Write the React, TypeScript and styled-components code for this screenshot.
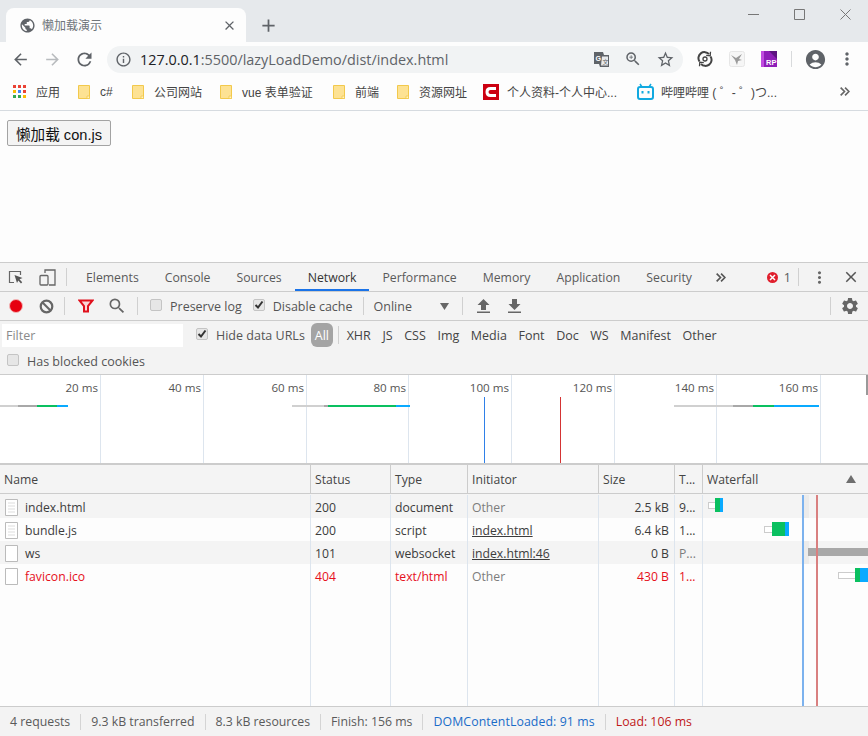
import React from "react";
import styled, { createGlobalStyle } from "styled-components";
import {
  MdAccountCircle, MdAdd, MdArrowBack, MdArrowForward, MdClose, MdInfoOutline, MdMoreVert,
  MdPublic, MdRefresh, MdSearch, MdSettings, MdStarBorder, MdZoomIn,
} from "react-icons/md";

const CJK = `"Noto Sans CJK SC", sans-serif`;
const UI = `"Open Sans", "Noto Sans CJK SC", sans-serif`;

const Global = createGlobalStyle`
  html, body { margin: 0; padding: 0; background: #fdfdfd; overflow: hidden; }
  * { box-sizing: border-box; }
`;

const Page = styled.div`
  width: 868px; height: 736px; display: flex; flex-direction: column; overflow: hidden;
  font-family: ${UI}; background: #fdfdfd;
`;

/* ---------- browser chrome ---------- */
const TabStrip = styled.div`
  height: 42px; flex: none; background: #e6e9ec; display: flex; align-items: flex-end; padding-left: 6px; position: relative;
`;
const Tab = styled.div`
  width: 240px; height: 34px; background: #fdfdfd; border-radius: 8px 8px 0 0; display: flex; align-items: center;
  padding: 0 9px 0 13px; color: #5f6368;
`;
const TabTitle = styled.span`
  font: 12px ${CJK}; color: #70757a; margin: -2px 0 0 6px; flex: 1;
`;
const NewTab = styled.div`
  height: 34px; margin-left: 12px; display: flex; align-items: center; color: #5f6368;
`;
const WindowControls = styled.div`
  margin-left: auto; align-self: flex-start; display: flex; color: #777;
`;
const WindowButton = styled.div`
  width: 46px; height: 28px; display: flex; align-items: center; justify-content: center;
`;
const NavBar = styled.div`
  height: 34px; flex: none; display: flex; align-items: center; padding-left: 4px; color: #5f6368;
`;
const NavButton = styled.div<{ $dim?: boolean }>`
  width: 32px; height: 28px; display: flex; align-items: center; justify-content: center;
  color: ${(p) => (p.$dim ? "#b8bbbe" : "#5f6368")};
`;
const Omnibox = styled.div`
  width: 576px; height: 27px; margin-left: 7px; border-radius: 14px; background: #f1f3f4; display: flex; align-items: center; padding-left: 8px;
`;
const Url = styled.span`
  font: 14.4px "Open Sans", sans-serif; color: #202124; margin-left: 8px; flex: 1;
`;
const UrlDim = styled.span`
  color: #5f6368;
`;
const OmniIcons = styled.div`
  display: flex; padding-right: 2px;
`;
const ToolSlot = styled.div<{ $w?: number }>`
  width: ${(p) => p.$w ?? 32}px; height: 24px; display: flex; align-items: center; justify-content: center; flex: none;
`;
const NavRight = styled.div`
  display: flex; align-items: center; margin-left: 6px;
`;
const NavSep = styled.div`
  width: 1px; height: 16px; background: #d8dadc; margin: 0 6px;
`;
const Bookmarks = styled.div`
  height: 35px; flex: none; display: flex; align-items: center; padding: 0 0 3px 13px; border-bottom: 1px solid #d6dbe0; position: relative;
`;
const Bookmark = styled.div<{ $w: number; $gap: number }>`
  width: ${(p) => p.$w}px; flex: none; display: flex; align-items: center; gap: ${(p) => p.$gap}px;
  font: 12px ${`"Liberation Sans", ${CJK}`}; color: #444; white-space: nowrap;
`;
const More = styled.div`
  margin-left: auto; margin-right: 18px; display: flex; color: #666;
`;
const Content = styled.div`
  height: 151px; flex: none; padding: 9px 7px;
`;
const DemoButton = styled.button`
  width: 104px; height: 26px; padding: 0; font: 14.6px ${`"Liberation Sans", ${CJK}`}; color: #111; background: #f4f4f4;
  border: 1px solid #a3a3a3; border-radius: 2px; display: block;
`;

/* ---------- devtools ---------- */
const Dev = styled.div`
  flex: 1; display: flex; flex-direction: column; min-height: 0; border-top: 1px solid #ccc; font-size: 12.5px; color: #555;
`;
const Bar = styled.div<{ $h: number }>`
  height: ${(p) => p.$h}px; flex: none; display: flex; align-items: center; background: #f3f3f3; border-bottom: 1px solid #ccc; position: relative;
`;
const DevIcon = styled.div<{ $w: number; $pad?: number }>`
  width: ${(p) => p.$w}px; height: 100%; display: flex; align-items: center; justify-content: center; flex: none; color: #666;
  padding-left: ${(p) => p.$pad ?? 0}px;
`;
const DevSep = styled.div<{ $m?: number; $push?: boolean }>`
  width: 1px; height: 18px; background: #d0d0d0; flex: none; margin: 0 ${(p) => p.$m ?? 0}px;
  ${(p) => (p.$push ? "margin-left: auto;" : "")}
`;
const DevTab = styled.div<{ $active?: boolean }>`
  height: 100%; padding: 0 13px; display: flex; align-items: center; flex: none; white-space: nowrap; font-size: 12.25px;
  color: ${(p) => (p.$active ? "#333" : "#5a5a5a")};
  box-shadow: ${(p) => (p.$active ? "inset 0 -2px 0 #1a73e8" : "none")};
`;
const MoreTabs = styled.div`
  height: 100%; margin-left: 10px; display: flex; align-items: center; flex: none;
`;
const ErrorCount = styled.div`
  display: flex; align-items: center; gap: 6px; margin-left: auto; color: #5a5a5a;
`;
const ErrorDot = styled.span`
  width: 11px; height: 11px; border-radius: 50%; background: #e01f2d; color: #fff; display: flex; align-items: center; justify-content: center;
`;
const CheckLabel = styled.label<{ $gap?: number }>`
  display: flex; align-items: center; gap: ${(p) => p.$gap ?? 8}px; white-space: nowrap; flex: none;
`;
const CheckBox = styled.span<{ $on?: boolean }>`
  width: 12px; height: 12px; border: 1px solid #c4c4c4; border-radius: 2px; background: #e6e6e6; display: flex;
  align-items: center; justify-content: center; flex: none; margin-top: -3px; color: #333;
`;
const Filters = styled.div`
  height: 54px; flex: none; background: #f3f3f3; border-bottom: 1px solid #ccc; display: flex; flex-direction: column;
`;
const FilterRow = styled.div`
  height: 28px; display: flex; align-items: center; flex: none;
`;
const FilterInput = styled.div`
  width: 181px; height: 23px; margin-left: 2px; background: #fff; padding-left: 4px; color: #8a8a8a; display: flex; align-items: center; flex: none;
`;
const AllPill = styled.div`
  width: 22px; height: 24px; border-radius: 6px; background: #a4a4a4; color: #fff; display: flex; align-items: center; justify-content: center; flex: none;
  margin: 0 5px 0 6px;
`;
const TypeFilter = styled.span`
  padding: 0 5.8px; flex: none; color: #444;
`;
const BlockedRow = styled.div`
  flex: 1; display: flex; align-items: center; padding-left: 7px;
`;
const Overview = styled.div`
  height: 88px; flex: none; display: flex; position: relative; background: #fff; overflow: hidden;
`;
const TickCell = styled.div<{ $w: number }>`
  width: ${(p) => p.$w}px; flex: none; border-right: 1px solid #dde5ee; text-align: right; padding: 5px 2px 0 0; color: #555; white-space: nowrap; font-size: 11.6px;
`;
const ChartLayer = styled.svg`
  position: absolute; left: 0; top: 0;
`;
const Table = styled.div`
  flex: 1; min-height: 0; display: flex; flex-direction: column; position: relative; border-top: 2px solid #ccc; font-size: 12.2px;
`;
const Row = styled.div<{ $kind: "head" | "even" | "odd" | "fill"; $first?: boolean }>`
  display: grid; grid-template-columns: 311px 80px 77px 131px 76px 28px 165px; flex: none;
  height: ${(p) => (p.$kind === "head" ? "29px" : p.$first ? "24px" : "23px")};
  padding-top: ${(p) => (p.$first ? "1px" : "0")};
  ${(p) => (p.$kind === "fill" ? "flex: 1;" : "")}
  background: ${(p) => (p.$kind === "head" || p.$kind === "even" ? "#f4f4f4" : "#fdfdfd")};
  border-bottom: ${(p) => (p.$kind === "head" ? "1px solid #ccc" : "0")};
`;
const Cell = styled.div<{ $head?: boolean; $right?: boolean; $tone?: "red" | "dim" | "link"; $last?: boolean }>`
  display: flex; align-items: center; min-width: 0; overflow: hidden; white-space: nowrap; gap: 6px;
  padding: ${(p) => (p.$head ? "0" : "1px")} ${(p) => (p.$right ? "5px" : "4px")} 0 4px;
  justify-content: ${(p) => (p.$right ? "flex-end" : "flex-start")};
  border-right: ${(p) => (p.$last ? "0" : p.$head ? "1px solid #ccc" : "1px solid #dde5ee")};
  color: ${(p) => (p.$tone === "red" ? "#e6101c" : p.$tone === "dim" ? "#7c7c7c" : "#3c3c3c")};
  text-decoration: ${(p) => (p.$tone === "link" ? "underline" : "none")};
  ${(p) => (p.$head ? "color: #444;" : "")}
`;
const SortMark = styled.span`
  margin-left: auto; margin-right: 8px; width: 0; height: 0; border-left: 5px solid transparent; border-right: 5px solid transparent; border-bottom: 8px solid #6e6e6e;
`;
const Footer = styled.div`
  height: 30px; flex: none; background: #f3f3f3; border-top: 1px solid #ccc; display: flex; align-items: center; position: relative; font-size: 12.3px;
`;
const Stat = styled.div<{ $tone?: "blue" | "red" }>`
  padding: 0 10px; height: 16px; display: flex; align-items: center; white-space: nowrap; flex: none;
  border-right: 1px solid #d4d4d4;
  color: ${(p) => (p.$tone === "blue" ? "#1a6cc8" : p.$tone === "red" ? "#c01818" : "#5a5a5a")};
  ${(p) => (p.$tone === "blue" ? "letter-spacing: 0.1px;" : "")}
  &:last-child { border-right: 0; }
`;

/* ---------- drawings ---------- */
const Folder = () => (
  <svg width="12" height="14" viewBox="0 0 12 14">
    <path d="M.5.5h11v13H.5z" fill="#fde293" stroke="#f2c94c" />
    <path d="M9 11h2.500v2.500H9z" fill="#fff3c4" stroke="#f2c94c" strokeWidth=".8" />
  </svg>
);
const AppsGrid = () => (
  <svg width="13" height="13" viewBox="0 0 13 13">
    {[["#ea4335", "#ea4335", "#ea4335"], ["#fbbc04", "#4285f4", "#ea4335"], ["#34a853", "#34a853", "#fbbc04"]].map((r, y) =>
      r.map((c, x) => <rect key={`${x}${y}`} x={x * 5} y={y * 5} width="3" height="3" fill={c} />),
    )}
  </svg>
);
const RedC = () => (
  <svg width="16" height="16" viewBox="0 0 16 16">
    <rect width="16" height="16" fill="#cc0011" />
    <path d="M13 4.500H7.500Q4 4.500 4 8t3.500 3.500H13" fill="none" stroke="#fff" strokeWidth="3" />
  </svg>
);
const Bili = () => (
  <svg width="17" height="17" viewBox="0 0 17 17" fill="none" stroke="#11a9e0">
    <rect x="1" y="4" width="15" height="12" rx="2" strokeWidth="2" />
    <path d="M5 4 3 1M12 4l2-3" strokeWidth="1.500" />
    <path d="M5.500 8v2.500M11.500 8v2.500" strokeWidth="2" />
  </svg>
);
const Translate = () => (
  <svg width="15" height="15" viewBox="0 0 15 15">
    <path d="M0 0h9l1 3h5v12H6l-1-3H0z" fill="#5f6368" />
    <path d="M8 4.500h6v9H7z" fill="#e8eaec" />
    <text x="1.500" y="8.500" fontSize="7" fontFamily="Liberation Sans" fontWeight="700" fill="#fff">G</text>
    <text x="8.500" y="11.500" fontSize="6" fontFamily="Noto Sans CJK SC" fill="#5f6368">文</text>
  </svg>
);
const SyncExt = () => (
  <svg width="16" height="16" viewBox="0 0 16 16" fill="none" stroke="#444">
    <path d="M2.500 10.500A6 6 0 0 1 12 3.200M13.500 5.500A6 6 0 0 1 4 12.800" strokeWidth="2" />
    <path d="m13.500.8-.3 4-4-.4M2.500 15.200l.3-4 4 .4" strokeWidth="1.300" />
    <circle cx="8" cy="8" r="2" strokeWidth="1.300" />
  </svg>
);
const BirdExt = () => (
  <svg width="16" height="16" viewBox="0 0 16 16">
    <rect x=".5" y=".5" width="15" height="15" rx="2" fill="#f6f6f6" stroke="#e6e6e6" />
    <path d="M2 4l5 3 6-4-3 5 3 1-4 1-1 4-2-5z" fill="#9a9a9a" />
  </svg>
);
const RpExt = () => (
  <svg width="16" height="16" viewBox="0 0 16 16">
    <rect width="16" height="16" fill="#8f1fb8" />
    <rect width="3" height="16" fill="#c04ce0" />
    <path d="M8 0h8v8z" fill="#5d1480" />
    <text x="5" y="14" fontSize="7.500" fontFamily="Liberation Sans" fontWeight="700" fill="#fff">RP</text>
  </svg>
);
const InspectIcon = () => (
  <svg width="16" height="16" viewBox="0 0 16 16" fill="none">
    <path d="M6 13.500H1.500v-11h11V6" stroke="#666" strokeWidth="1.200" />
    <path d="m6.500 6 8 3-3 1.300 2.700 3-1.200 1.200-2.700-3L9 14z" fill="#555" />
  </svg>
);
const DeviceIcon = () => (
  <svg width="17" height="17" viewBox="0 0 17 17" fill="none" stroke="#666" strokeWidth="1.300">
    <path d="M6 4V1h10v15h-6" />
    <rect x="1" y="6.500" width="8" height="9.500" rx="1" />
  </svg>
);
const Chevrons = ({ size, color }: { size: number; color: string }) => (
  <svg width={size} height={size} viewBox="0 0 10 10" fill="none" stroke={color} strokeWidth="1.500">
    <path d="m1.500 1.500 3.500 3.500-3.500 3.500M5.500 1.500 9 5 5.500 8.500" />
  </svg>
);
const Funnel = () => (
  <svg width="16" height="14" viewBox="0 0 16 14" stroke="#e0101c" strokeWidth="2">
    <path d="M1.500 1.500h13L10 7v5.500H6V7z" fill="#fbd5d5" />
  </svg>
);
const ClearIcon = () => (
  <svg width="15" height="15" viewBox="0 0 15 15" fill="none" stroke="#666" strokeWidth="2.200">
    <circle cx="7.500" cy="7.500" r="5.800" />
    <path d="m3.500 3.500 8 8" />
  </svg>
);
const Arrow = ({ down }: { down?: boolean }) => (
  <svg width="13" height="14" viewBox="0 0 13 14" fill="#666">
    {down ? <path d="M4 0h5v5h3.500l-6 6-6-6H4zM0 12.500h13V14H0z" /> : <path d="M6.500 0l6 6H9v5H4V6H.5zM0 12.500h13V14H0z" />}
  </svg>
);
const Caret = () => <svg width="9" height="7" viewBox="0 0 9 7"><path d="M0 0h9L4.500 7z" fill="#666" /></svg>;
const Check = () => (
  <svg width="10" height="10" viewBox="0 0 10 10" fill="none" stroke="currentColor" strokeWidth="2">
    <path d="m1.500 5 2.500 2.500L8.500 1.500" />
  </svg>
);
const FileIcon = ({ lines }: { lines?: boolean }) => (
  <svg width="15" height="17" viewBox="0 0 15 17" fill="none" style={{ flex: "none" }}>
    <path d="M1.500.5h12v16h-12z" fill="#fff" stroke="#bbb" />
    {lines && <path d="M4 4h7M4 7h7M4 10h7M4 13h7" stroke="#ddd" />}
  </svg>
);

const ticks = [
  { w: 101, t: "20 ms" }, { w: 103, t: "40 ms" }, { w: 103, t: "60 ms" }, { w: 102, t: "80 ms" },
  { w: 103, t: "100 ms" }, { w: 103, t: "120 ms" }, { w: 102, t: "140 ms" }, { w: 104, t: "160 ms" },
];
const bm = [
  { w: 65, g: 10, i: <AppsGrid />, t: "应用" },
  { w: 54, g: 10, i: <Folder />, t: "c#" },
  { w: 88, g: 10, i: <Folder />, t: "公司网站" },
  { w: 113, g: 10, i: <Folder />, t: "vue 表单验证" },
  { w: 64, g: 10, i: <Folder />, t: "前端" },
  { w: 86, g: 10, i: <Folder />, t: "资源网址" },
  { w: 154, g: 8, i: <RedC />, t: "个人资料-个人中心..." },
  { w: 190, g: 7, i: <Bili />, t: "哔哩哔哩 ( ゜- ゜)つ..." },
];
const tabs = ["Elements", "Console", "Sources", "Network", "Performance", "Memory", "Application", "Security"];
const types = ["XHR", "JS", "CSS", "Img", "Media", "Font", "Doc", "WS", "Manifest", "Other"];
const rows = [
  { n: "index.html", s: "200", ty: "document", i: "Other", z: "2.5 kB", t: "9...", file: true, kind: "even" as const },
  { n: "bundle.js", s: "200", ty: "script", i: "index.html", z: "6.4 kB", t: "1...", file: true, kind: "odd" as const },
  { n: "ws", s: "101", ty: "websocket", i: "index.html:46", z: "0 B", t: "P...", file: false, kind: "even" as const },
  { n: "favicon.ico", s: "404", ty: "text/html", i: "Other", z: "430 B", t: "1...", file: false, kind: "odd" as const, red: true },
];
const Seg = ({ x1, x2, y, c, h = 2 }: { x1: number; x2: number; y: number; c: string; h?: number }) => (
  <rect x={x1} y={y} width={x2 - x1} height={h} fill={c} />
);

export default function App() {
  return (
    <Page>
      <Global />
      <TabStrip>
        <Tab>
          <MdPublic size={17} />
          <TabTitle>懒加载演示</TabTitle>
          <MdClose size={15} />
        </Tab>
        <NewTab><MdAdd size={21} /></NewTab>
        <WindowControls>
          <WindowButton>
            <svg width="11" height="11" viewBox="0 0 11 11"><path d="M0 5.500h11" stroke="#777" /></svg>
          </WindowButton>
          <WindowButton>
            <svg width="11" height="11" viewBox="0 0 11 11"><path d="M.5.5h10v10H.5z" fill="none" stroke="#777" /></svg>
          </WindowButton>
          <WindowButton>
            <svg width="11" height="11" viewBox="0 0 11 11"><path d="M.5.500l10 10M10.500.500l-10 10" stroke="#777" /></svg>
          </WindowButton>
        </WindowControls>
      </TabStrip>
      <NavBar>
        <NavButton><MdArrowBack size={19} /></NavButton>
        <NavButton $dim><MdArrowForward size={19} /></NavButton>
        <NavButton><MdRefresh size={21} /></NavButton>
        <Omnibox>
          <MdInfoOutline size={17} color="#5f6368" />
          <Url>127.0.0.1<UrlDim>:5500/lazyLoadDemo/dist/index.html</UrlDim></Url>
          <OmniIcons>
            <ToolSlot><Translate /></ToolSlot>
            <ToolSlot><MdZoomIn size={18} /></ToolSlot>
            <ToolSlot><MdStarBorder size={19} /></ToolSlot>
          </OmniIcons>
        </Omnibox>
        <NavRight>
          <ToolSlot><SyncExt /></ToolSlot>
          <ToolSlot><BirdExt /></ToolSlot>
          <ToolSlot><RpExt /></ToolSlot>
          <NavSep />
          <ToolSlot $w={34}><MdAccountCircle size={23} /></ToolSlot>
          <ToolSlot $w={30}><MdMoreVert size={20} /></ToolSlot>
        </NavRight>
      </NavBar>
      <Bookmarks>
        {bm.map((b) => (
          <Bookmark key={b.t} $w={b.w} $gap={b.g}>{b.i}<span>{b.t}</span></Bookmark>
        ))}
        <More><Chevrons size={11} color="#666" /></More>
      </Bookmarks>
      <Content>
        <DemoButton>懒加载 con.js</DemoButton>
      </Content>
      <Dev>
        <Bar $h={29}>
          <DevIcon $w={32}><InspectIcon /></DevIcon>
          <DevIcon $w={30}><DeviceIcon /></DevIcon>
          <DevSep $m={4} />
          <DevIcon $w={2} />
          {tabs.map((t) => <DevTab key={t} $active={t === "Network"}>{t}</DevTab>)}
          <MoreTabs><Chevrons size={11} color="#555" /></MoreTabs>
          <ErrorCount>
            <ErrorDot><svg width="7" height="7" viewBox="0 0 7 7"><path d="m1 1 5 5M6 1 1 6" stroke="#fff" strokeWidth="1.500" /></svg></ErrorDot>
            1
          </ErrorCount>
          <DevIcon $w={7} />
          <DevSep />
          <DevIcon $w={41}><MdMoreVert size={19} /></DevIcon>
          <DevIcon $w={22}><MdClose size={18} color="#555" /></DevIcon>
          <DevIcon $w={6} />
        </Bar>
        <Bar $h={29}>
          <DevIcon $w={31}>
            <svg width="16" height="16" viewBox="0 0 16 16"><circle cx="8" cy="8" r="6.500" fill="#e6000f" stroke="#f3b6b6" /></svg>
          </DevIcon>
          <DevIcon $w={31}><ClearIcon /></DevIcon>
          <DevSep $m={2} />
          <DevIcon $w={38}><Funnel /></DevIcon>
          <DevIcon $w={24}><MdSearch size={20} /></DevIcon>
          <DevSep $m={8} />
          <DevIcon $w={4} />
          <CheckLabel><CheckBox />Preserve log</CheckLabel>
          <DevIcon $w={11} />
          <CheckLabel><CheckBox $on><Check /></CheckBox>Disable cache</CheckLabel>
          <DevSep $m={10} />
          <span>Online</span>
          <DevIcon $w={50} $pad={16}><Caret /></DevIcon>
          <DevSep />
          <DevIcon $w={41}><Arrow /></DevIcon>
          <DevIcon $w={21}><Arrow down /></DevIcon>
          <DevSep $push />
          <DevIcon $w={37}><MdSettings size={20} /></DevIcon>
        </Bar>
        <Filters>
          <FilterRow>
            <FilterInput>Filter</FilterInput>
            <DevIcon $w={13} />
            <CheckLabel><CheckBox $on><Check /></CheckBox>Hide data URLs</CheckLabel>
            <AllPill>All</AllPill>
            <DevSep />
            <DevIcon $w={2} />
            {types.map((t) => <TypeFilter key={t}>{t}</TypeFilter>)}
          </FilterRow>
          <BlockedRow><CheckLabel><CheckBox />Has blocked cookies</CheckLabel></BlockedRow>
        </Filters>
        <Overview>
          {ticks.map((t) => <TickCell key={t.t} $w={t.w}>{t.t}</TickCell>)}
          <ChartLayer width="868" height="88">
            <Seg x1={0} x2={18} y={30} c="#d0d0d0" /><Seg x1={18} x2={37} y={30} c="#a8a8a8" />
            <Seg x1={37} x2={57} y={30} c="#0ac060" /><Seg x1={57} x2={68} y={30} c="#09aaff" />
            <Seg x1={292} x2={324} y={30} c="#d0d0d0" /><Seg x1={324} x2={328} y={30} c="#a8a8a8" />
            <Seg x1={328} x2={396} y={30} c="#0ac060" /><Seg x1={396} x2={410} y={30} c="#09aaff" />
            <Seg x1={674} x2={733} y={30} c="#d0d0d0" /><Seg x1={733} x2={753} y={30} c="#a8a8a8" />
            <Seg x1={753} x2={774} y={30} c="#0ac060" /><Seg x1={774} x2={819} y={30} c="#09aaff" />
            <rect x="484" y="22" width="1" height="66" fill="#2f80e8" />
            <rect x="560" y="22" width="1" height="66" fill="#d43434" />
            <rect x="866" y="0" width="2" height="20" fill="#999" />
          </ChartLayer>
        </Overview>
        <Table>
          <Row $kind="head">
            <Cell $head>Name</Cell>
            <Cell $head>Status</Cell>
            <Cell $head>Type</Cell>
            <Cell $head>Initiator</Cell>
            <Cell $head>Size</Cell>
            <Cell $head>T...</Cell>
            <Cell $head $last>Waterfall<SortMark /></Cell>
          </Row>
          {rows.map((r, idx) => {
            const tone = r.red ? ("red" as const) : undefined;
            return (
              <Row key={r.n} $kind={r.kind} $first={idx === 0}>
                <Cell $tone={tone}><FileIcon lines={r.file} />{r.n}</Cell>
                <Cell $tone={tone}>{r.s}</Cell>
                <Cell $tone={tone}>{r.ty}</Cell>
                <Cell $tone={r.i === "Other" ? "dim" : "link"}>{r.i}</Cell>
                <Cell $tone={tone} $right>{r.z}</Cell>
                <Cell $tone={r.t === "P..." ? "dim" : tone}>{r.t}</Cell>
                <Cell $last />
              </Row>
            );
          })}
          <Row $kind="fill">
            <Cell /><Cell /><Cell /><Cell /><Cell /><Cell /><Cell $last />
          </Row>
          <ChartLayer width="868" height="241">
            <rect x="804" y="30" width="5" height="23" fill="#ebebeb" />
            <rect x="804" y="76" width="5" height="23" fill="#ebebeb" />
            <rect x="708.500" y="37.500" width="7" height="6" fill="#fff" stroke="#ccc" />
            <Seg x1={715} x2={720} y={33} c="#0ac060" h={14} /><Seg x1={720} x2={723} y={33} c="#09aaff" h={14} />
            <rect x="764.500" y="61.500" width="8" height="6" fill="#fff" stroke="#ccc" />
            <Seg x1={772} x2={785} y={57} c="#0ac060" h={14} /><Seg x1={785} x2={789} y={57} c="#09aaff" h={14} />
            <Seg x1={808} x2={868} y={83} c="#a8a8a8" h={8} />
            <rect x="838.500" y="107.500" width="17" height="6" fill="#fff" stroke="#ccc" />
            <Seg x1={855} x2={860} y={103} c="#0ac060" h={14} /><Seg x1={860} x2={868} y={103} c="#09aaff" h={14} />
            <rect x="802" y="30" width="2" height="211" fill="#7cb2ee" />
            <rect x="816" y="30" width="2" height="211" fill="#d98080" />
          </ChartLayer>
        </Table>
        <Footer>
          <Stat>4 requests</Stat>
          <Stat>9.3 kB transferred</Stat>
          <Stat>8.3 kB resources</Stat>
          <Stat>Finish: 156 ms</Stat>
          <Stat $tone="blue">DOMContentLoaded: 91 ms</Stat>
          <Stat $tone="red">Load: 106 ms</Stat>
        </Footer>
      </Dev>
    </Page>
  );
}
